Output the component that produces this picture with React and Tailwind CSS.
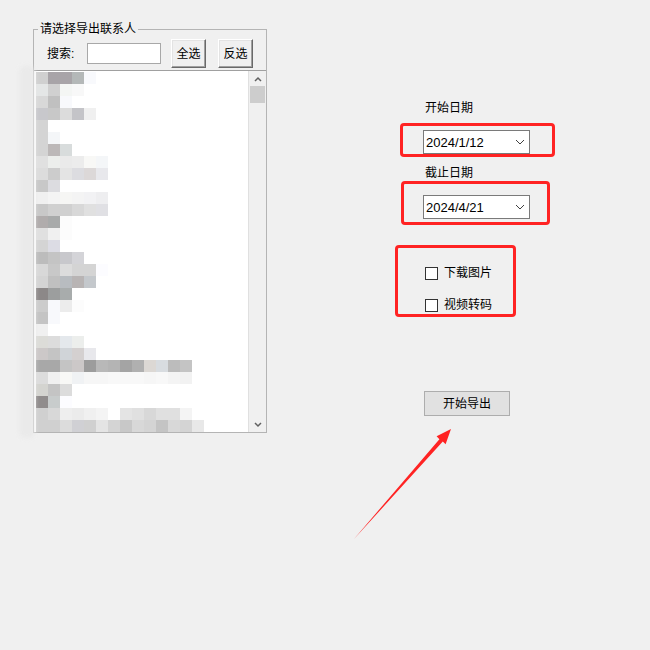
import React from "react";

const ROWS = [
  ["#d0d0d0", "#a8a4a8", "#a8a4a8", "#b4b8b8", "#f8f9fc"],
  ["#e4e6e6", "#d0d0d0", "#f4f6f4", "#f8f8f8"],
  ["#d8d8d8", "#c0c0c0", "#f8f9fc"],
  ["#c8c8cc", "#c8c8c8", "#dcdcdc", "#c4c4c8", "#f0f0f0"],
  ["#d4d4d4"],
  ["#d4d4d4", "#f4f6f8"],
  ["#d4d4d4", "#bcb8b8", "#d8dcdc"],
  ["#e0e0e0", "#eceeec", "#eaeaea", "#ececec", "#f8f8f6", "#f4f6f8"],
  ["#dcdcdc", "#cccccc", "#e4e4e4", "#dcdce0", "#dcd8d8", "#e8e8ec"],
  ["#c8c8c8", "#dcdce0"],
  ["#f0f0f0", "#f4f4f4", "#f6f6f4", "#f4f4f4", "#f2f2f4", "#eeeef0"],
  ["#c8c8c8", "#d0d0d0", "#d0d0d0", "#d8d8d8", "#e0e0e0", "#e0e0e4"],
  ["#b0acac", "#a8aaaa", "#fcfcfc"],
  ["#e0e0e0", "#f0f0f0", "#fcfcfc"],
  ["#d4d4d4", "#dcdce4"],
  ["#bcbcbc", "#c4c4c4", "#c8c8cc", "#d4d4d8"],
  ["#d8d8d8", "#c8c8c8", "#dcdcdc", "#d4d4d4", "#d4d4d4", "#fcfcff"],
  ["#d4d4d4", "#c0c0c0", "#b8bcc0", "#b8b4b4", "#c4c8cc"],
  ["#8c8888", "#9c9e9e", "#a8acac"],
  ["#cccccc", "#f8f9fc", "#ececec", "#fcfcfc"],
  ["#c4c4c4", "#f8f9fc"],
  ["#f0f0f0"],
  ["#dcdcd8", "#dcdcdc", "#e4e8ec", "#eceeec"],
  ["#ccc8c8", "#c4c4c4", "#d0d4d8", "#d4d0d0", "#e8e8ec"],
  ["#a8a8a8", "#a8a8a8", "#c4c4c4", "#ccc8c8", "#9c9c9c", "#b8b8b8", "#b4b4b4", "#a4a4a4", "#b0b0b0", "#dcd8d4", "#d8dce0", "#bcbcbc", "#c4c4c4"],
  ["#dcdcdc", "#f0f0f0", "#f8f8f6", "#f0f2f4", "#f6f6f6", "#f6f6f6", "#f8f8f8", "#f8f8f8", "#f8f8f8", "#f6f6f6", "#f8f8f8", "#f4f4f4", "#f2f2f2"],
  ["#d4d4d0", "#c4c4c4", "#dcdcdc"],
  ["#908c8c", "#c8cccc", "#fcfcff"],
  ["#d0d0d0", "#d8d8d8", "#eeeeee", "#ebebeb", "#f0f0f0", "#f4f4f4", "#ffffff", "#e4e4e4", "#e0e0e0", "#d8d8d8", "#e0e0e0", "#e0e0e0", "#f4f4f4"],
  ["#d0d0d0", "#d0d0d0", "#dcdcdc", "#d0d0d4", "#d0d0d0", "#e4e4e4", "#d4d4d4", "#c8c8c8", "#d8d8d8", "#d4d4d4", "#c4c4c4", "#d8d8d8", "#d4d4d4", "#e8e8e8"],
];

const FONT = "font-['Liberation_Sans','Noto_Sans_CJK_SC',sans-serif]";

function ClassicButton({ children }) {
  return (
    <button className="w-[35px] h-[29px] flex items-center justify-center bg-[#f0f0f0] border border-t-white border-l-white border-b-[#696969] border-r-[#696969] shadow-[inset_-1px_-1px_0_#a0a0a0,inset_1px_1px_0_#e3e3e3] text-[12px] leading-none text-black">
      {children}
    </button>
  );
}

function DatePicker({ value }) {
  return (
    <div className="w-[107px] h-[24px] bg-white border border-[#7a7a7a] flex items-center justify-between pl-[2px] pr-[4px]">
      <span className="text-[13px] leading-none text-black">{value}</span>
      <svg width="10" height="6" viewBox="0 0 10 6">
        <path d="M1 1 L5 5 L9 1" fill="none" stroke="#404040" strokeWidth="1" />
      </svg>
    </div>
  );
}

function Check({ label }) {
  return (
    <div className="flex items-center">
      <div className="w-[13px] h-[13px] bg-white border border-[#333333]" />
      <span className="ml-[6px] text-[12px] leading-[14px] text-black">{label}</span>
    </div>
  );
}

export default function App() {
  return (
    <div className={`relative w-[650px] h-[650px] bg-[#f0f0f0] overflow-hidden ${FONT}`}>
      <div className="flex items-start pl-[33px] pt-[23px]">
        {/* Left group box */}
        <fieldset className="w-[234px] h-[410px] border border-[#b4b4b4] flex flex-col">
          <legend className="ml-[4px] px-[2px] text-[12px] leading-[13px] h-[13px] text-black">请选择导出联系人</legend>
          <div className="flex items-center mt-[3px] h-[29px]">
            <span className="ml-[13px] w-[40px] text-[12px] leading-none text-black">搜索:</span>
            <div className="w-[74px] h-[21px] bg-white border border-[#a8a8a8]" />
            <div className="ml-[10px]">
              <ClassicButton>全选</ClassicButton>
            </div>
            <div className="ml-[12px]">
              <ClassicButton>反选</ClassicButton>
            </div>
          </div>
          <div className="mt-[2px] h-[362px] flex border-t border-[#a0a0a0] overflow-hidden">
            <div className="w-[214px] bg-white pl-[2px] pt-[1px] flex flex-col">
              {ROWS.map((row, i) => (
                <div key={i} className="flex h-[12px] shrink-0">
                  {row.map((c, j) => (
                    <div key={j} className="w-[12px] h-[12px]" style={{ background: c }} />
                  ))}
                </div>
              ))}
            </div>
            <div className="w-[1px] bg-[#e0e0e0]" />
            <div className="w-[17px] bg-[#f0f0f0] flex flex-col">
              <div className="h-[15px] flex items-center justify-center">
                <svg width="8" height="6" viewBox="0 0 8 6">
                  <path d="M1 5 L4 2 L7 5" fill="none" stroke="#606060" strokeWidth="1.5" />
                </svg>
              </div>
              <div className="ml-[1px] w-[15px] h-[17px] bg-[#cdcdcd]" />
              <div className="flex-1" />
              <div className="h-[14px] flex items-center justify-center">
                <svg width="8" height="6" viewBox="0 0 8 6">
                  <path d="M1 1 L4 4 L7 1" fill="none" stroke="#606060" strokeWidth="1.5" />
                </svg>
              </div>
            </div>
          </div>
        </fieldset>

        {/* Right column */}
        <div className="ml-[128px] flex flex-col items-start">
          <div className="mt-[77px] ml-[30px] text-[12px] leading-[16px] text-black">开始日期</div>
          <div className="mt-[7px] ml-[5px] w-[155px] h-[34px] border-[3px] border-[#ff2323] rounded-[4px] pt-[4px] pl-[20px]">
            <DatePicker value="2024/1/12" />
          </div>
          <div className="mt-[8px] ml-[30px] text-[12px] leading-[16px] text-black">截止日期</div>
          <div className="ml-[6px] w-[149px] h-[44px] border-[3px] border-[#ff2323] rounded-[4px] pt-[11px] pl-[19px]">
            <DatePicker value="2024/4/21" />
          </div>
          <div className="mt-[20px] w-[121px] h-[72px] border-[3px] border-[#ff2323] rounded-[4px] pl-[27px] pt-[18px] flex flex-col gap-[18px]">
            <Check label="下载图片" />
            <Check label="视频转码" />
          </div>
          <button className="mt-[74px] ml-[29px] w-[86px] h-[25px] bg-[#e1e1e1] border border-[#adadad] text-[12px] leading-none text-black flex items-center justify-center">
            开始导出
          </button>
        </div>
      </div>

      {/* Blur smear left of the mosaic (overlay) */}
      <div className="absolute left-[19px] top-[66px] w-[16px] h-[372px] bg-[#e9e9e9] opacity-80 blur-[2px] rounded-[6px]" />

      {/* Red annotation arrow */}
      <svg className="absolute left-[350px] top-[425px]" width="110" height="120" viewBox="0 0 110 120">
        <polygon
          points="4,114 89.4,14.2 86.6,11.3 101,4 95.6,19.2 92.8,16.6"
          fill="#ff2323"
        />
      </svg>
    </div>
  );
}
